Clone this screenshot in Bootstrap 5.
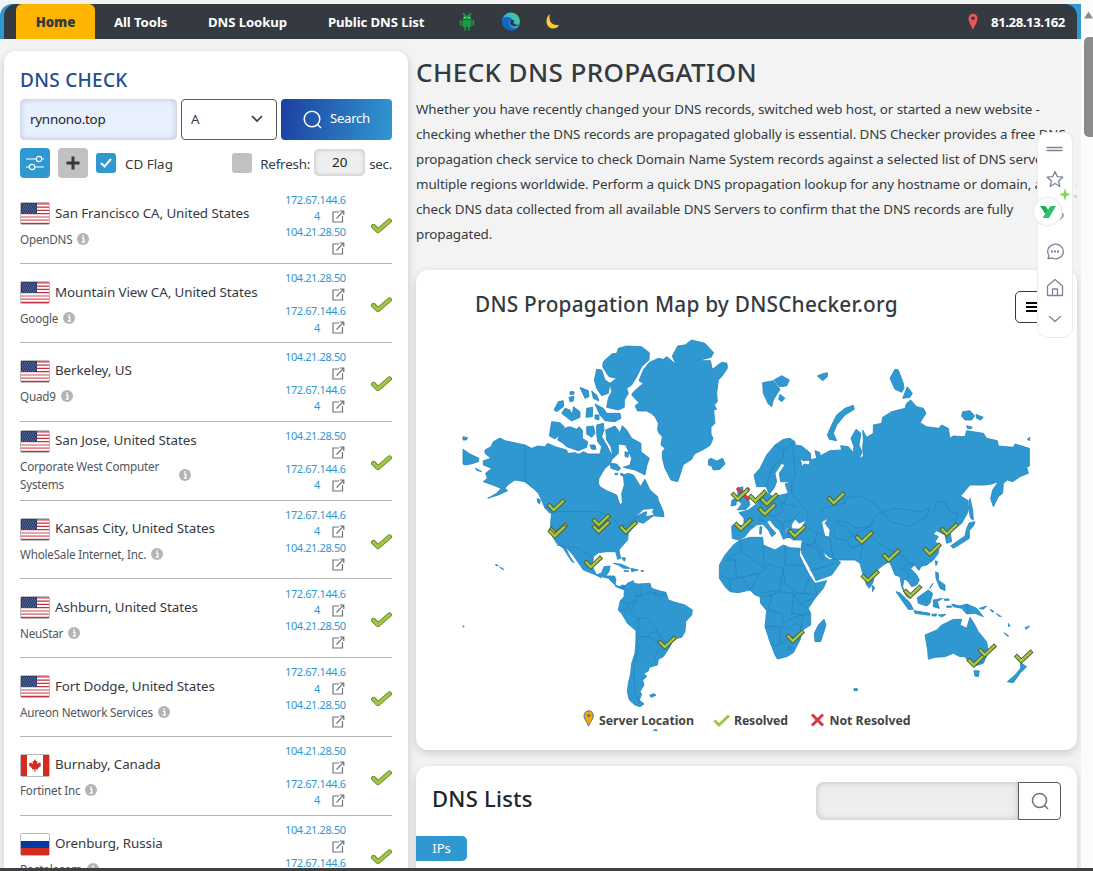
<!DOCTYPE html>
<html lang="en">
<head>
<meta charset="utf-8">
<title>DNS Checker</title>
<link href="https://cdn.jsdelivr.net/npm/bootstrap@5.3.0/dist/css/bootstrap.min.css" rel="stylesheet">
<style>
html,body{height:100%;overflow:hidden}
body{font-family:"Noto Sans","Open Sans",sans-serif;background:#f3f3f3;color:#343a40;width:1093px;height:871px;font-size:13.4px;line-height:1.2}
svg{display:block;flex:none}
.page{width:1081px;height:868px;padding-top:4px;overflow:hidden;border-top:0}
.topnav{height:35px;background:#3098d0;border-radius:12px 0 0 0;padding:0 4px}
.topnav .inner{background:#343a40;height:35px;border-radius:12px 12px 0 0;padding-left:12px;color:#fff;font-weight:700;font-size:13.2px;letter-spacing:-.1px;white-space:nowrap}
.topnav .inner>*{position:relative;}
.topnav .active-tab{background:#ffb400;color:#343a40;width:79px;height:35px;border-radius:6px 6px 0 0}
.topnav span,.topnav b{padding-top:2px}
.content{padding:12px 4px 0}
.panel{background:#fff;border-radius:12px;box-shadow:0 3px 8px rgba(0,0,0,.17)}
.left{width:404px;height:860px;padding:16px;flex:none}
.left h2{font-size:19px;font-weight:500;color:#214d8c;margin:0 0 5.5px;line-height:26px;letter-spacing:.3px}
.domain{width:157px;height:41px;background:#e8f0fe;border:0;border-radius:5px;box-shadow:inset 0 0 6px #b5bfd2;padding-left:10px;color:#212529;letter-spacing:-.25px}
.type{width:96px;height:41px;border:1px solid #555b60;border-radius:4px;padding:0 13px 0 9px}
.go{width:111px;height:41px;border-radius:4px;background:linear-gradient(100deg,#1c3fa2,#3098d0);color:#fff;border:0;font-size:13.2px;letter-spacing:-.3px}
.sq{width:30px;height:30px;border-radius:4px}
.cb{width:20px;height:20px;border-radius:3px;background:#c1c1c1}
.blue{background:#3098d0}
.num{width:51px;height:27px;border-radius:5px;background:#eee;box-shadow:inset 0 0 5px #bbb;color:#212529}
.rows{margin-top:8px}
.srv{height:78.8px;border-bottom:1px solid #b4b4b4}
.where{width:265px;padding-top:1px}
.where .loc{height:28px;white-space:nowrap;letter-spacing:-.09px}
.where .loc svg{position:relative;top:1px}
.where .isp{font-size:11.7px;line-height:18px;color:#50565c;margin:3px 0;gap:5px;letter-spacing:-.22px}
.ips{width:64px;font-size:11px;line-height:16.4px;color:#3098d0;letter-spacing:-.4px;white-space:nowrap}
.ips .ip{height:16.4px;padding-right:4px}
.ips .ic{height:16.4px;gap:12px;padding-right:4px}
.right{width:661px;flex:none;margin-left:8px}
.right h1{font-size:26px;font-weight:500;line-height:32px;margin:5px 0 9px;letter-spacing:.4px;white-space:nowrap}
.intro{font-size:13.4px;line-height:25px;margin:0 0 23px;letter-spacing:-.1px;white-space:nowrap}
.mapbox{height:480px;overflow:hidden}
.maphead{height:65px;padding:21px 0 0 0}
.maphead h3{font-size:20.8px;font-weight:500;line-height:26px;margin:0 0 0 59px;letter-spacing:.23px;white-space:nowrap}
.menu{width:44px;height:32px;border:1px solid #343a40;border-radius:5px;margin-right:18px}
.lists{height:140px;margin-top:16px;padding-top:16px}
.lists h3{font-size:22px;font-weight:500;line-height:30px;color:#212529;margin:1px 0 0 16px;letter-spacing:.25px}
.find{width:202px;height:38px;background:#eee;border-radius:8px 0 0 8px;box-shadow:inset 0 0 6px #bbb}
.findb{width:43px;height:38px;border:1px solid #555b60;border-radius:0 4px 4px 0;margin-right:16px}
.tab{width:51px;height:25px;border-radius:0 5px 5px 0;color:#fff;margin-top:16px;font-size:13px}
.sbar{width:12px;background:#fcfcfc;height:868px}
.sbar i{display:block;width:9px;height:100px;background:#8b8b8b;border-radius:5px 0 0 5px;margin-left:3px;margin-top:17px}
.floatbar{position:absolute;left:1037px;top:132px;width:36px;height:206px;background:#fff;border:1px solid #ececf0;border-radius:10px;z-index:3}
.floatart{position:absolute;left:1027px;top:132px;z-index:4}
.foot{position:absolute;left:0;right:0;top:868px;height:3px;background:#403f41;z-index:5}
.st{stroke:#7c8498;fill:none;stroke-width:1.3;stroke-linecap:round;stroke-linejoin:round}
.land{fill:#3098d0;stroke:#2487c3;stroke-width:2.5;stroke-linejoin:round}
.bd{fill:none;stroke:#2487c3;stroke-width:3;stroke-linejoin:round}
.sea{fill:#fff;stroke:#2487c3;stroke-width:2}
.lg{font-size:12.3px;font-weight:700;fill:#444}
</style>
</head>
<body class="position-relative">
<svg width="0" height="0" class="position-absolute">
<defs>
<symbol id="tick" viewBox="0 0 21 16"><path d="M2.500 8.300 7 12.800 18.500 2.800" fill="none" stroke="#6b7c35" stroke-width="4.800" stroke-linecap="round" stroke-linejoin="round"/><path d="M2.500 8.300 7 12.800 18.500 2.800" fill="none" stroke="#9fc740" stroke-width="3.200" stroke-linecap="round" stroke-linejoin="round"/></symbol>
<g id="mk"><path d="M-6.600.500-2.200 5 7-3.700" fill="none" stroke="#4f5a2a" stroke-width="4.300" stroke-linecap="square"/><path d="M-6.600.500-2.200 5 7-3.700" fill="none" stroke="#a2c849" stroke-width="2.500" stroke-linecap="square"/></g>
<symbol id="ext" viewBox="0 0 13 13"><path d="M7 2H1v10h9.500V6M4.500 8.500 11.500 1.200M7.800 1h4v4" fill="none" stroke="#6c757d" stroke-width="1.200"/></symbol>
<symbol id="info" viewBox="0 0 12 12"><circle cx="6" cy="6" r="6" fill="#b4b4b4"/><path d="M5 5.200h1.700v3.600M4.700 9h3M5.300 3h1.400" fill="none" stroke="#fff" stroke-width="1.400"/></symbol>
<symbol id="us" viewBox="0 0 30 23"><rect x=".5" y=".5" width="29" height="22" rx="1.500" fill="#fff" stroke="#bbb"/><path d="M1 1.800h28M1 11.700h28M1 8.400h28M1 5.100h28M1 21.400h28" stroke="#c5303c" stroke-width="1.200"/><path d="M1 15h28M1 18.200h28" stroke="#dd8a90" stroke-width="1.700"/><path d="M1 1h16v11H1z" fill="#2c3f70"/><path d="M2 3h14M3 5h14M2 7h14M3 9h14M2 11h14" stroke="#8190b5" stroke-width=".8" stroke-dasharray="1 1"/></symbol>
<symbol id="ca" viewBox="0 0 30 23"><rect x=".5" y=".5" width="29" height="22" rx="1.500" fill="#fff" stroke="#bbb"/><path d="M1 1h6v21H1zM23 1h6v21h-6z" fill="#d52b1e"/><path d="m15 5 1.300 2.400 1.200-.5-.4 3 1.500-1.200 2.400.2-.6 2 .8.700-3.400 2.700.2 1.200-2.500-.3V18h-1v-2.800l-2.500.3.200-1.200-3.400-2.700.8-.7-.6-2 2.400-.2 1.500 1.200-.4-3 1.200.5z" fill="#d52b1e"/></symbol>
<symbol id="ru" viewBox="0 0 30 23"><rect x=".5" y=".5" width="29" height="22" rx="1.500" fill="#fff" stroke="#bbb"/><path d="M1 8h28v7H1z" fill="#0039a6"/><path d="M1 15h28v7H1z" fill="#d52b1e"/></symbol>
<linearGradient id="eg" x1="1" y1="0" x2="0" y2="1"><stop offset="0" stop-color="#5bd35a"/><stop offset=".45" stop-color="#2fb9dc"/><stop offset="1" stop-color="#0f5fc4"/></linearGradient>
</defs>
</svg>

<div class="d-flex">
<div class="page">
  <nav class="topnav"><div class="inner d-flex align-items-center">
    <div class="active-tab d-flex align-items-center justify-content-center"><b>Home</b></div>
    <span style="margin-left:19px;width:94px">All Tools</span><span style="width:120px">DNS Lookup</span><span style="width:131px">Public DNS List</span>
    <svg width="16" height="18" viewBox="0 0 16 18"><g fill="#1c9a48"><path d="M3.500 6.500a4.500 4.300 0 0 1 9 0z"/><path d="M3.500 7.200h9v6.500h-9z"/></g><path d="M4.500.8 6 3M11.500.8 10 3M1.700 7.800v4M14.300 7.800v4M6.200 13v3.800M9.800 13v3.800" stroke="#1c9a48" stroke-width="1.700" stroke-linecap="round"/><circle cx="6" cy="4.700" r=".6" fill="#fff"/><circle cx="10" cy="4.700" r=".6" fill="#fff"/></svg>
    <svg style="margin-left:27px" width="18" height="19" viewBox="0 0 18 19"><circle cx="9" cy="9.500" r="9" fill="url(#eg)"/><path d="M0 8c2-4 9-4 10 0-3 0-4 3-2 6s6 3 8 1c-2 3-6 4-9 3C2 17 0 13 0 8z" fill="#1064c4"/><path d="M9 8c-2 2-1 5 2 6 3 .8 6-.5 6-1.500-2 .5-5 0-5.500-1.500 1.500-2 0-4-2.500-3z" fill="#343a40"/></svg>
    <svg style="margin-left:26px" width="14" height="17" viewBox="0 0 14 17"><path d="M4 1C-1 5-.5 12 4 14.700c4 2 8 .3 9-3C6 13 2 8 4 1z" fill="#ffcb2e"/></svg>
    <svg class="ms-auto" width="10" height="18" viewBox="0 0 10 18"><path d="M5 17C3 12 .5 9 .5 5.500a4.500 4.800 0 0 1 9 0C9.500 9 7 12 5 17z" fill="#e95757"/><circle cx="5" cy="5.300" r="1.700" fill="#343a40"/></svg>
    <span style="margin:0 12px 0 13px;letter-spacing:-.42px">81.28.13.162</span>
  </div></nav>
  <div class="content d-flex">
    <section class="panel left">
      <h2>DNS CHECK</h2>
      <div class="d-flex justify-content-between">
        <div class="domain d-flex align-items-center">rynnono.top</div>
        <div class="type d-flex align-items-center justify-content-between">A <svg width="12" height="8" viewBox="0 0 12 8"><path d="m1 1 5 5 5-5" fill="none" stroke="#343a40" stroke-width="1.600"/></svg></div>
        <button class="go d-flex align-items-center justify-content-center gap-2 p-0"><svg width="19" height="19" viewBox="0 0 19 19" fill="none" stroke="#fff" stroke-width="1.500"><circle cx="9" cy="9" r="7.800"/><path d="m14 14 4 4"/></svg>Search</button>
      </div>
      <div class="d-flex align-items-center" style="margin-top:8px">
        <div class="sq blue d-flex align-items-center justify-content-center"><svg width="18" height="16" viewBox="0 0 18 16" fill="none" stroke="#fff" stroke-width="1.200"><path d="M0 4h10M16 4h2M0 12h3M9 12h9"/><circle cx="13" cy="4" r="2.700"/><circle cx="6" cy="12" r="2.700"/></svg></div>
        <div class="sq d-flex align-items-center justify-content-center" style="background:#c1c1c1;margin-left:8px"><svg width="14" height="14" viewBox="0 0 14 14"><path d="M7 .5v13M.5 7h13" stroke="#343a40" stroke-width="3"/></svg></div>
        <div class="cb blue d-flex align-items-center justify-content-center" style="margin-left:8px"><svg width="12" height="10" viewBox="0 0 12 10"><path d="m1 5 3.500 3.500L11 1" fill="none" stroke="#fff" stroke-width="2"/></svg></div>
        <span class="pt-1" style="margin-left:9px">CD Flag</span>
        <div class="cb ms-auto"></div><span class="pt-1" style="margin:0 4px 0 8px;letter-spacing:-.2px">Refresh:</span><div class="num d-flex align-items-center justify-content-center">20</div><span class="pt-1" style="margin-left:4px;letter-spacing:-.3px">sec.</span>
      </div>
      <div class="rows" id="rows"></div>
    </section>
    <section class="right">
      <h1>CHECK DNS PROPAGATION</h1>
      <p class="intro">Whether you have recently changed your DNS records, switched web host, or started a new website -<br>checking whether the DNS records are propagated globally is essential. DNS Checker provides a free DNS<br>propagation check service to check Domain Name System records against a selected list of DNS servers<br>multiple regions worldwide. Perform a quick DNS propagation lookup for any hostname or domain, and<br>check DNS data collected from all available DNS Servers to confirm that the DNS records are fully<br>propagated.</p>
      <div class="panel mapbox">
        <div class="maphead d-flex justify-content-between"><h3>DNS Propagation Map by DNSChecker.org</h3><div class="menu d-flex align-items-center justify-content-center" style="padding-right:10px"><svg width="12" height="12"><path d="M0 2h12M0 6h12M0 10h12" stroke="#000" stroke-width="1.800"/></svg></div></div>
        <svg width="661" height="415" viewBox="416 335 661 415">
          <g class="land" transform="translate(455 330) scale(.33333)">
            <path d="M582 98 610 85 625 88 636 80 662 103 652 78 668 48 690 45 710 30 750 40 776 68 768 82 728 92 766 92 772 118 800 97 816 100 817 115 800 140 790 150 785 190 787 215 778 225 785 238 776 240 780 280 768 292 768 312 774 325 766 345 752 355 718 372 710 388 685 404 675 435 668 455 648 450 630 415 622 385 622 365 630 355 618 345 622 320 612 310 608 300 610 280 600 260 588 250 575 243 548 243 540 228 552 218 530 195 536 185 565 160 552 152 565 120Z"/>
            <path d="M470 72 485 70 490 55 515 48 560 50 583 68 582 90 560 110 545 140 530 165 515 175 520 190 508 210 508 232 490 240 455 232 460 205 470 185 465 160 485 145 462 140 455 130 443 110 445 95Z"/>
            <path d="M425 118 440 120 450 150 465 160 460 190 440 197 425 175 418 150ZM328 295 345 290 365 298 372 290 382 300 382 325 398 335 395 352 370 362 335 350 322 338 308 330 315 310ZM290 275 315 278 328 290 310 318 300 327 283 318ZM452 300 480 288 495 308 502 287 515 300 530 325 558 340 558 365 583 385 575 408 570 435 540 420 505 412 525 405 530 385 512 345 490 342 490 370 475 385 468 350 455 330ZM395 290 415 288 420 310 410 322 395 312ZM420 222 445 235 455 250 495 250 498 265 480 275 450 272 435 255ZM330 235 345 240 352 255 355 230 375 245 375 262 350 273 335 262 320 250ZM297 240 310 215 325 212 325 230 305 245ZM375 172 400 182 402 200 390 205ZM345 185h12v8h-12ZM342 202 357 199 355 213 345 215ZM410 183 425 195 432 213 415 205ZM395 235 413 232 412 260 393 262ZM420 255h12v15l-12-3ZM465 400 485 402 497 415 490 422 468 415ZM510 365l12 3-3 14-9-3ZM405 345 420 345 423 358 410 358ZM480 430h8v4h-8ZM497 430l8 2-1 6-7-3Z"/>
            <path d="M135 324 150 332 210 345 230 355 248 348 270 350 278 340 300 350 335 360 338 370 360 368 372 373 385 365 400 372 435 372 440 350 428 335 425 310 425 285 445 280 447 300 440 320 455 345 465 365 475 380 465 402 450 415 432 445 430 460 435 470 455 482 485 495 495 525 502 518 500 490 508 465 505 435 520 430 535 435 548 455 556 470 570 448 585 480 608 500 612 525 600 535 565 538 540 562 565 548 575 545 572 560 600 555 585 565 565 580 550 575 535 592 520 610 518 630 500 650 492 660 497 685 488 688 482 665 455 665 430 668 415 680 412 710 425 735 440 728 447 710 465 708 462 725 452 738 478 738 483 750 480 765 492 770 503 765 515 768 505 778 480 765 460 745 430 738 385 720 375 705 350 670 330 650 345 680 357 698 350 694 325 655 305 640 285 605 290 545 270 535 262 515 250 490 235 475 210 455 180 450 158 465 150 475 158 482 130 495 98 505 125 490 138 475 105 462 85 455 97 445 92 430 110 415 85 405 85 392 108 385 90 370 90 360 108 350 115 335Z"/>
            <path d="M592 545 612 515 625 545 627 560 600 558ZM268 528l10 5 14 17-10-2ZM247 505l9 5-2 12-6-5ZM24 320l14 3-4 7H24ZM24 358 45 372 72 385 70 395 48 402 30 405 24 402ZM62 415l18 10-15-4ZM122 703l8 4-7 0ZM134 710l12 8-6-1ZM475 700 500 703 525 715 505 715 490 705ZM528 715 550 720 530 725ZM507 722h14v2h-14ZM558 722h8v2h-8ZM500 683l12 1-4 10ZM24 888h3v3h-3ZM760 390 768 385 785 393 803 385 810 402 795 418 775 420 770 408 760 405Z"/>
            <path class="bd" d="M210 345V455L235 475M298 545H430L455 555 480 570 490 590 520 580 545 562M305 645 340 650 375 655 385 668 400 670 415 690M425 735 440 745M470 755 480 740"/>
          </g>
          <g class="land" transform="translate(540 560) scale(.33333)">
            <path d="M245 80 253 80 262 70 280 62 282 70 295 72 330 70 335 85 360 93 378 97 385 120 400 125 435 135 457 150 455 165 437 185 435 215 425 232 400 238 390 260 370 290 355 298 352 315 328 322 325 333 312 340 320 350 308 360 312 375 300 395 305 403 298 420 312 432 300 440 285 435 268 420 262 395 265 370 272 340 275 310 285 280 288 240 288 212 262 190 248 165 235 150 240 125 252 110 253 90ZM330 405l12-4 6 5-15 6ZM340 511l8-3 4 4ZM225 78l15 6 14-5-2 9-12-3Z"/>
            <path class="bd" d="M240 120 265 130 290 120 285 105 300 110 330 95 360 108 380 105M290 120 270 155 290 175 320 175 350 205 350 215 330 218 325 230 295 230 295 175M325 230 350 245 365 250M350 215 375 245 350 280 345 295M290 230 295 260 280 330 285 400 300 430M265 130 262 150 245 150M305 80 300 110M345 95V110M372 97V108"/>
          </g>
          <g class="land" transform="translate(720 330) scale(.33333)">
            <path d="M128 158 160 152 180 178 160 210 155 230 145 222 130 190ZM162 150 185 137 208 150 200 168 178 170ZM180 193 195 205 185 215 176 208ZM292 138 303 133 322 128 322 140 308 152 300 145ZM400 226 403 238 375 255 350 285 340 310 350 332 328 328 322 315 335 285 350 255 375 235ZM525 118 535 120 550 160 552 175 545 187 525 178 510 145ZM562 170 577 190 570 202 548 205ZM728 245 750 242 764 258 755 270 735 270 725 258ZM768 253 790 262 782 270 770 265ZM740 287 757 292 752 297 742 295ZM922 328l7-6v10Z"/>
            <path d="M210 325 225 335 225 345 245 348 272 370 272 390 250 392 240 385 247 412 252 402 268 405 270 390 290 385 285 362 300 368 300 378 330 362 365 360 362 347 385 350 400 368 402 350 393 325 408 298 423 310 417 345 426 365 418 388 430 378 428 355 430 330 428 300 440 322 460 310 460 285 485 280 488 262 515 245 555 235 560 220 572 210 590 230 610 235 618 250 600 278 620 290 655 295 665 285 685 295 690 325 700 318 735 320 740 302 790 310 800 325 832 332 835 348 880 352 885 342 928 355V408L920 412 925 430 900 440 878 455 862 450 850 460 848 490 835 500 820 530 812 505 818 480 835 455 815 462 795 465 750 465 722 498 745 512 742 550 725 580 712 590 690 605 695 635 680 640 675 615 650 602 640 612 655 620 645 635 658 645 655 670 640 690 620 705 600 710 595 720 585 705 572 715 590 735 598 750 590 765 575 770 565 755 552 745 548 770 556 790 568 805 558 797 545 770 540 740 525 735 515 710 508 695 490 705 465 725 460 755 448 775 440 765 428 730 420 700 405 690 350 690 325 680 310 665 315 680 330 690 345 685 362 697 335 735 288 752 283 740 262 700 245 670 243 655 247 630 220 630 205 620 200 600 210 590 245 592 215 585 195 600 208 620 190 628 178 600 165 590 150 570 140 575 150 590 168 610 155 620 145 600 128 582 110 585 90 600 75 620 55 630 37 625 35 590 38 585 72 587 72 565 57 548 85 540 110 522 120 505 130 495V480L142 490 160 500 205 490 195 462 215 456 182 455 178 430 195 405 185 400 165 430 170 455 162 475 148 492 138 470 110 470 102 435 120 415 140 375 165 345 190 328Z"/>
            <path d="M52 475 68 470 70 490 85 505 90 525 78 538 52 540 65 522 55 510ZM36 510 50 505 48 525 33 528ZM750 505 758 540 760 570 752 565 745 535ZM748 578 765 575 762 585 748 602 748 625 725 640 700 655 692 648 710 635 735 618 740 595ZM120 590l5 0-1 22h-5Z"/>
            <path class="sea" d="M215 583 225 568 238 580 258 570 250 585 265 595 235 597 215 596ZM305 575 325 565 315 580 330 600 328 620 315 620 310 600Z"/>
            <path class="bd" d="M165 345 190 360 220 340M190 360V385L160 410 150 430 138 470M215 340 222 380 225 440 215 456 215 490 250 530 265 545 260 575M160 500 190 520 205 490M190 520 230 530M120 510 130 550 160 560 190 545 180 520M130 550 115 570 140 575M160 560 185 580 215 570 240 545M185 580 190 600M75 587 100 590M300 550 310 535 375 520 375 505 420 498 455 515 490 545 465 560 450 590 410 595 390 580 345 570M490 545 530 535 600 545 630 535 620 560 570 590 510 575 490 545M640 545 650 515 675 515 690 545 715 550 700 590M345 575 375 590 400 615 450 590M400 615 380 630 395 655 430 640 445 615 500 655 555 680M430 640 420 690M340 600 345 625 380 630M265 595 295 610 330 625 340 690M290 610 285 640 310 665M245 650 285 640M250 640 290 655 310 690M270 720 320 710 340 700M515 690 530 670 555 680 565 700 540 720M548 715 570 740 550 750M570 700 590 705"/>
          </g>
          <g class="land" transform="translate(700 480) scale(.33333)">
            <path d="M100 195 75 225 58 255V295L75 320 90 335 115 338 150 330 165 345 180 350 182 370 200 392 195 440 208 480 225 525 232 537 260 530 280 518 300 480 308 450 332 435V400L325 385 345 355 370 325 380 302 345 310 328 285 310 250 298 225 300 205 270 203 250 195 225 210 190 195 188 172 150 172 120 180ZM372 418 378 435 362 485 345 485 343 460 355 435Z"/>
            <path d="M588 335 600 338 630 368 640 388 625 388 605 360ZM642 392 690 400 688 406 645 400ZM695 403 710 402 708 408 697 408ZM715 405 738 403 725 411ZM652 353 685 330 698 340 690 370 680 378 655 370ZM700 360 728 355 712 365 718 385 700 380ZM707 275 716 280 715 300 735 315V332L720 325 708 295ZM700 310 690 325 692 318ZM733 357h14v4h-14ZM740 378h14v4h-14ZM755 372 780 378 800 372 830 385 850 410 825 400 800 402 785 385 760 380ZM838 385 860 378 850 388ZM870 388l12 6-4 3ZM888 400l16 10-8-2ZM925 430l5 8-4 2ZM912 458l14 10-4 1ZM975 443l14-5-10 10ZM706 242l7 3-5 12ZM650 262l12 0-5 9ZM516 315l8 8-6 12Z"/>
            <path d="M675 465 710 450 725 435 740 428 760 418 785 418 780 435 800 445 810 412 822 430 835 455 860 485 865 515 850 550 825 558 805 545 795 530 780 530 760 520 735 530 705 532 685 538 683 510ZM822 572 838 573 835 590 825 588ZM962 548 980 560 960 580 940 608 922 605 945 585 962 565ZM462 626h10v6h-10Z"/>
            <path class="bd" d="M120 180 125 215 80 235M125 215 195 265 180 280 110 295 105 240 75 240M188 195 192 250 200 265M255 200V255H310M192 250 250 265 240 330 180 340M250 265 255 310 290 340 310 340 330 290M130 295 150 330 170 300 180 280M110 295 90 300V330M60 285 90 300M182 350 215 345 235 335 280 340 275 400 310 405 330 400M215 345 205 390 245 400 250 430 285 410 310 405 300 450M195 440H240L265 445 285 430 310 440M240 440V490L225 500 210 490M240 490 280 470 300 480M280 340 300 370 325 385M265 500 275 503 268 512ZM345 310 350 345 310 340M298 210 320 205 345 180M300 370 345 355M803 372V402"/>
          </g>
          <path d="m737 488 12 12m0-12-12 12" stroke="#dc3545" stroke-width="3.500"/>
          <g id="marks"></g>
          <path d="M588.500 726c-2-5-4.500-7-4.500-10.500a4.700 4.700 0 0 1 9.400 0c0 3.500-2.900 5.500-4.900 10.500z" fill="#ffa500" stroke="#3c789c"/><circle cx="588.700" cy="715.500" r="1.500" fill="#3c789c"/>
          <path d="m714.500 720.500 4.500 4.500 10-9.500" fill="none" stroke="#9fc740" stroke-width="3"/>
          <path d="m812 714.500 11 11m0-11-11 11" stroke="#dc3545" stroke-width="3"/>
          <text class="lg" x="599" y="725" textLength="95">Server Location</text><text class="lg" x="734" y="725" textLength="54">Resolved</text><text class="lg" x="829.500" y="725" textLength="81">Not Resolved</text>
        </svg>
      </div>
      <div class="panel lists">
        <div class="d-flex"><h3 class="me-auto">DNS Lists</h3><div class="find"></div><div class="findb d-flex align-items-center justify-content-center"><svg width="18" height="18" viewBox="0 0 18 18" fill="none" stroke="#6c757d" stroke-width="1.500"><circle cx="8.500" cy="8.500" r="7"/><path d="m13 13 4 4"/></svg></div></div>
        <div class="tab blue d-flex align-items-center justify-content-center">IPs</div>
      </div>
    </section>
  </div>
</div>
<div class="sbar"><svg width="12" height="20"><path d="m3 18.500 4.500-7 4.500 7z" fill="#8b8b8b"/></svg><i></i></div>
</div>
<div class="floatbar"></div>
<svg class="floatart" width="56" height="206" viewBox="1027 132 56 206">
  <path class="st" d="M1047 147.500h15M1047 150.500h15" stroke-width="1"/>
  <path class="st" d="M1055 171.500l2.300 5.200 5.500.5-4.200 3.700 1.300 5.600-4.900-3-4.900 3 1.300-5.600-4.200-3.700 5.500-.5zM1058 208l4.500 6q1.500 2-1 4t-5 3.500q-3 0-6-4M1048 258.500l1-3a7.800 7.300 0 1 1 3 2.500zM1047.500 286l7.500-6.500 7.500 6.500v9.500h-15zM1052.500 295.500v-6.500h5v6.500M1049.500 316.500l5.500 5 5.500-5"/>
  <path d="M1051 251.500h2m1 0h2m1 0h2" stroke="#7c8498" stroke-width="1.800"/>
  <circle cx="1047.500" cy="211.500" r="14.200" fill="#fff" stroke="#eee" stroke-width="1.500"/>
  <path d="m1040 206h5.500l3.500 5-3 4z" fill="#1fae58"/><path d="M1050.500 206h5.500l-7 12h-6.500z" fill="#2fc46b"/>
  <path d="m1065 188 1.500 5 4 1.500-4 1.500-1.500 5-1.500-5-4.500-1.500 4.500-1.500z" fill="#7edb55"/><circle cx="1075.500" cy="196.500" r="1.600" fill="#a5eaa0"/><circle cx="1076" cy="186" r="1" fill="#cdeec8"/>
</svg>
<div class="foot"></div>
<script>
const A='172.67.144.6',B='104.21.28.50';
const ext='<svg width="13" height="13"><use href="#ext"/></svg>';
const ips={[A]:`<div class="ip">${A}</div><div class="ic d-flex justify-content-end align-items-center">4 ${ext}</div>`,[B]:`<div class="ip">${B}</div><div class="ic d-flex justify-content-end align-items-center">${ext}</div>`};
const list=[['us','San Francisco CA, United States','OpenDNS',A],['us','Mountain View CA, United States','Google',B],['us','Berkeley, US','Quad9',B],['us','San Jose, United States','Corporate West Computer<br>Systems',B],['us','Kansas City, United States','WholeSale Internet, Inc.',A],['us','Ashburn, United States','NeuStar',A],['us','Fort Dodge, United States','Aureon Network Services',A],['ca','Burnaby, Canada','Fortinet Inc',B],['ru','Orenburg, Russia','Rostelecom',B]];
document.getElementById('rows').innerHTML=list.map(([f,l,p,first])=>`<div class="srv d-flex align-items-center"><div class="where"><div class="loc d-flex align-items-center"><svg width="30" height="23" style="margin-right:5px"><use href="#${f}"/></svg>${l}</div><div class="isp d-flex align-items-center"><span${p.includes('<br>')?' style="width:154px"':''}>${p}</span><svg width="12" height="12"><use href="#info"/></svg></div></div><div class="ips text-end">${ips[first]}${ips[first===A?B:A]}</div><svg class="ms-auto mt-1" width="21" height="16"><use href="#tick"/></svg></div>`).join('');
document.getElementById('marks').innerHTML=[[556,505],[558,529],[557,531],[601,520],[601,526.5],[628,527],[593,562],[740,494],[757.5,496],[769,499],[767,509],[836,498],[743,524],[797,531],[864,537],[949,529],[932,549],[891,555],[870,576],[912.5,591],[795,636],[976,660],[987,650],[1023.5,656],[667,642]].map(([x,y])=>`<use href="#mk" x="${x}" y="${y}"/>`).join('');
</script>
<script src="https://cdn.jsdelivr.net/npm/bootstrap@5.3.0/dist/js/bootstrap.bundle.min.js"></script>
</body>
</html>
